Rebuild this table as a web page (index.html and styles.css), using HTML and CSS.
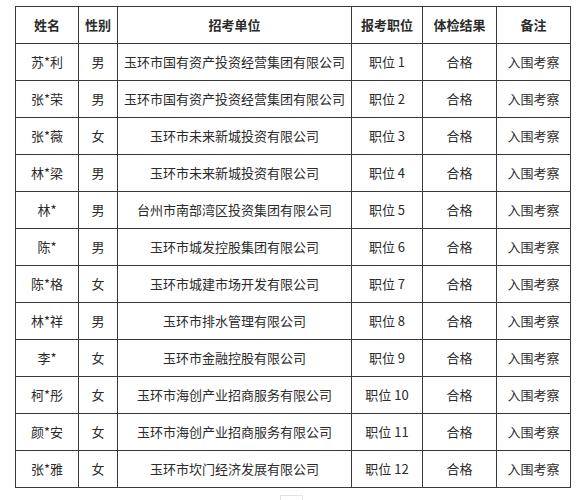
FILE: index.html
```html
<!DOCTYPE html>
<html lang="zh">
<head>
<meta charset="utf-8">
<link rel="stylesheet" href="styles.css">
</head>
<body>
<table class="grid">
  <colgroup>
    <col class="c-name"><col class="c-sex"><col class="c-unit"><col class="c-pos"><col class="c-res"><col class="c-note">
  </colgroup>
  <thead>
    <tr><th>姓名</th><th>性别</th><th>招考单位</th><th>报考职位</th><th>体检结果</th><th>备注</th></tr>
  </thead>
  <tbody>
    <tr><td>苏*利</td><td>男</td><td>玉环市国有资产投资经营集团有限公司</td><td>职位 1</td><td>合格</td><td>入围考察</td></tr>
    <tr><td>张*荣</td><td>男</td><td>玉环市国有资产投资经营集团有限公司</td><td>职位 2</td><td>合格</td><td>入围考察</td></tr>
    <tr><td>张*薇</td><td>女</td><td>玉环市未来新城投资有限公司</td><td>职位 3</td><td>合格</td><td>入围考察</td></tr>
    <tr><td>林*梁</td><td>男</td><td>玉环市未来新城投资有限公司</td><td>职位 4</td><td>合格</td><td>入围考察</td></tr>
    <tr><td>林*</td><td>男</td><td>台州市南部湾区投资集团有限公司</td><td>职位 5</td><td>合格</td><td>入围考察</td></tr>
    <tr><td>陈*</td><td>男</td><td>玉环市城发控股集团有限公司</td><td>职位 6</td><td>合格</td><td>入围考察</td></tr>
    <tr><td>陈*格</td><td>女</td><td>玉环市城建市场开发有限公司</td><td>职位 7</td><td>合格</td><td>入围考察</td></tr>
    <tr><td>林*祥</td><td>男</td><td>玉环市排水管理有限公司</td><td>职位 8</td><td>合格</td><td>入围考察</td></tr>
    <tr><td>李*</td><td>女</td><td>玉环市金融控股有限公司</td><td>职位 9</td><td>合格</td><td>入围考察</td></tr>
    <tr><td>柯*彤</td><td>女</td><td>玉环市海创产业招商服务有限公司</td><td>职位 10</td><td>合格</td><td>入围考察</td></tr>
    <tr><td>颜*安</td><td>女</td><td>玉环市海创产业招商服务有限公司</td><td>职位 11</td><td>合格</td><td>入围考察</td></tr>
    <tr><td>张*雅</td><td>女</td><td>玉环市坎门经济发展有限公司</td><td>职位 12</td><td>合格</td><td>入围考察</td></tr>
  </tbody>
</table>
<div class="tab-stub"></div>
</body>
</html>
```
FILE: styles.css
```css
html, body {
  margin: 0;
  padding: 0;
  background: #fff;
}
body {
  font-family: "Noto Sans CJK SC", "Noto Sans", sans-serif;
  color: #2b2b2b;
  font-size: 13px;
}
.grid {
  margin: 6px 0 0 15px;
  border-collapse: collapse;
  table-layout: fixed;
  width: 555px;
}
.c-name { width: 63px; }
.c-sex { width: 39px; }
.c-unit { width: 234px; }
.c-pos { width: 71px; }
.c-res { width: 74px; }
.c-note { width: 74px; }
.grid th, .grid td {
  border: 1px solid #3a3a3a;
  height: 36px;
  padding: 0;
  text-align: center;
  vertical-align: middle;
  white-space: nowrap;
  line-height: 16px;
}
.grid th {
  font-weight: 700;
}
.tab-stub {
  margin: 7px 0 0 280px;
  width: 23px;
  height: 10px;
  border: 1px solid #e4e4e4;
  border-bottom: none;
  box-sizing: border-box;
}
```
